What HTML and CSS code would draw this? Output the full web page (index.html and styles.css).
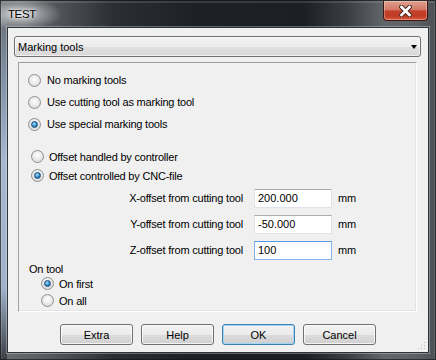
FILE: index.html
```html
<!DOCTYPE html>
<html lang="en">
<head>
    <meta charset="UTF-8">
    <title>TEST</title>
    <link rel="stylesheet" href="styles.css">
</head>
<body>
    <div class="window">
        <div class="titlebar">
            <span class="title">TEST</span>
            <div class="close">
                <svg width="13" height="12" viewBox="0 0 13 12">
                    <path d="M2.5 2 L10.5 10 M10.5 2 L2.5 10" stroke="#4a2a24" stroke-width="4.6" stroke-linecap="square"/>
                    <path d="M2.5 2 L10.5 10 M10.5 2 L2.5 10" stroke="#fff" stroke-width="2.6" stroke-linecap="square"/>
                </svg>
            </div>
        </div>

        <div class="client">
            <div class="combo">
                <span>Marking tools</span>
                <span class="arrow"></span>
            </div>

            <div class="panel">
                <!-- marking tool type -->
                <div class="opts">
                    <div class="opt"><span class="radio"></span>No marking tools</div>
                    <div class="opt"><span class="radio"></span>Use cutting tool as marking tool</div>
                    <div class="opt"><span class="radio checked"></span>Use special marking tools</div>
                </div>

                <div class="opts sub">
                    <div class="opt"><span class="radio"></span>Offset handled by controller</div>
                    <div class="opt"><span class="radio checked"></span>Offset controlled by CNC-file</div>
                </div>

                <div class="offsets">
                    <div class="orow">
                        <span class="olabel">X-offset from cutting tool</span>
                        <span class="field">200.000</span>
                        <span class="unit">mm</span>
                    </div>
                    <div class="orow">
                        <span class="olabel">Y-offset from cutting tool</span>
                        <span class="field">-50.000</span>
                        <span class="unit">mm</span>
                    </div>
                    <div class="orow">
                        <span class="olabel">Z-offset from cutting tool</span>
                        <span class="field focused">100</span>
                        <span class="unit">mm</span>
                    </div>
                </div>

                <div class="ontool">
                    <div class="ontool-label">On tool</div>
                    <div class="opt"><span class="radio checked"></span>On first</div>
                    <div class="opt"><span class="radio"></span>On all</div>
                </div>
            </div>

            <div class="buttons">
                <div class="btn">Extra</div>
                <div class="btn">Help</div>
                <div class="btn default">OK</div>
                <div class="btn">Cancel</div>
            </div>

            <svg class="grip" width="8" height="8" viewBox="0 0 8 8">
                <rect x="6" y="0" width="1" height="1" fill="#b8b8b8"/>
                <rect x="6" y="3" width="1" height="1" fill="#b8b8b8"/>
                <rect x="3" y="3" width="1" height="1" fill="#b8b8b8"/>
                <rect x="6" y="6" width="1" height="1" fill="#b8b8b8"/>
                <rect x="3" y="6" width="1" height="1" fill="#b8b8b8"/>
                <rect x="0" y="6" width="1" height="1" fill="#b8b8b8"/>
            </svg>
        </div>
    </div>
</body>
</html>
```

FILE: styles.css
```css
body {
    margin: 0;
    font-family: "Liberation Sans", Arial, sans-serif;
    font-size: 11px;
    color: #000;
    background: #1c1f23;
}
.window {
    width: 436px;
    height: 360px;
    display: flex;
    flex-direction: column;
    box-sizing: border-box;
    background:
        radial-gradient(ellipse 42px 16px at 20px 14px, rgba(225, 228, 231, 0.85), rgba(225, 228, 231, 0) 100%),
        linear-gradient(to bottom, #676a6e 0, #7e8ea3 20%, #a6b8cf 45%, #9fb2ca 80%, #3a3e43 100%) left top / 7px 100% no-repeat,
        linear-gradient(to right, #6c6f72 0, #54575b 12%, #2b2f34 26%, #1d2126 45%, #1c2025 70%, #3c4044 80%, #62666a 88%, #5e6266 95%, #4c5054 100%);
    box-shadow: inset 0 0 0 1px rgba(0, 0, 0, 0.6), inset 0 1px 0 2px rgba(255, 255, 255, 0.12);
}
.titlebar {
    height: 28px;
    display: flex;
    justify-content: space-between;
    align-items: flex-start;
}
.title {
    margin: 8px 0 0 8px;
    font-size: 11.5px;
    line-height: 12px;
    letter-spacing: -0.4px;
    text-shadow: 0 0 5px #fff, 0 0 2px rgba(255, 255, 255, 0.8);
}
.close {
    margin: 1px 8px 0 0;
    width: 45px;
    height: 20px;
    box-sizing: border-box;
    border: 1px solid #3e1810;
    border-top: none;
    border-radius: 0 0 4px 4px;
    display: flex;
    align-items: center;
    justify-content: center;
    background: linear-gradient(#dfa090 0, #d57a66 45%, #c3432d 52%, #c03a25 78%, #d9593c 100%);
    box-shadow: inset 0 0 0 1px rgba(255, 255, 255, 0.3);
}
.client {
    position: relative;
    flex: 1;
    margin: 0 8px 8px;
    padding: 8px 7px 0 6px;
    display: flex;
    flex-direction: column;
    background: #f0f0f0;
    box-shadow: 0 0 0 1px #2f3338, 0 0 0 2px rgba(255, 255, 255, 0.3);
}
.combo {
    height: 21px;
    box-sizing: border-box;
    border: 1px solid #707070;
    border-radius: 3px;
    padding: 0 3px 0 3px;
    display: flex;
    align-items: center;
    justify-content: space-between;
    background: linear-gradient(#f3f3f3 0, #ececec 50%, #e0e0e0 51%, #d8d8d8 100%);
    box-shadow: inset 0 0 0 1px rgba(255, 255, 255, 0.6);
}
.arrow {
    width: 0;
    height: 0;
    border-left: 3.5px solid transparent;
    border-right: 3.5px solid transparent;
    border-top: 4px solid #000;
    margin-top: 1px;
}
.panel {
    margin: 5px 4px 0;
    height: 250px;
    box-sizing: border-box;
    border: 1px solid;
    border-color: #a0a0a0 #fff #fff #a0a0a0;
    box-shadow: inset -1px -1px 0 #e3e3e3;
}
.opts {
    padding: 6px 0 0 9px;
}
.opt {
    height: 22px;
    display: flex;
    align-items: center;
    gap: 6px;
    letter-spacing: -0.2px;
}
.sub {
    margin-top: 12px;
    padding: 0 0 0 12px;
}
.sub .opt {
    height: 19px;
    gap: 5px;
}
.radio {
    width: 13px;
    height: 13px;
    box-sizing: border-box;
    border-radius: 50%;
    border: 1px solid #8e8f8f;
    background: radial-gradient(circle at 50% 40%, #ffffff 0, #ececec 45%, #cfcfcf 100%);
    display: flex;
    align-items: center;
    justify-content: center;
    flex: none;
}
.radio.checked::after {
    content: "";
    width: 7px;
    height: 7px;
    box-sizing: border-box;
    border-radius: 50%;
    border: 1px solid #1c4f7c;
    background: radial-gradient(circle at 40% 35%, #b7e3fa 0, #3e97d6 45%, #12527f 100%);
}
.offsets {
    letter-spacing: -0.2px;
}
.orow {
    height: 26px;
    display: flex;
    align-items: center;
}
.olabel {
    width: 224px;
    text-align: right;
}
.field {
    margin-left: 11px;
    width: 78px;
    height: 19px;
    box-sizing: border-box;
    padding: 0 3px;
    display: flex;
    align-items: center;
    background: #fff;
    border: 1px solid #e2e3ea;
    border-top-color: #abadb3;
    letter-spacing: 0;
}
.field.focused {
    border-color: #7eb4ea;
    border-top-color: #569de5;
}
.unit {
    margin-left: 6px;
}
.ontool {
    padding-left: 10px;
    letter-spacing: -0.2px;
}
.ontool-label {
    height: 12px;
    line-height: 12px;
}
.ontool .opt {
    height: 17px;
    padding-left: 12px;
    gap: 5px;
}
.buttons {
    margin-top: 12px;
    padding-left: 46px;
    display: flex;
    gap: 8px;
}
.btn {
    width: 73px;
    height: 21px;
    box-sizing: border-box;
    border: 1px solid #707070;
    border-radius: 3px;
    display: flex;
    align-items: center;
    justify-content: center;
    background: linear-gradient(#f2f2f2 0, #ebebeb 50%, #dddddd 51%, #cfcfcf 100%);
    box-shadow: inset 0 0 0 1px rgba(255, 255, 255, 0.75);
}
.btn.default {
    border-color: #3c7fb1;
    box-shadow: inset 0 0 0 1px #9fd6f5;
}
.grip {
    position: absolute;
    right: 2px;
    bottom: 2px;
}
```
